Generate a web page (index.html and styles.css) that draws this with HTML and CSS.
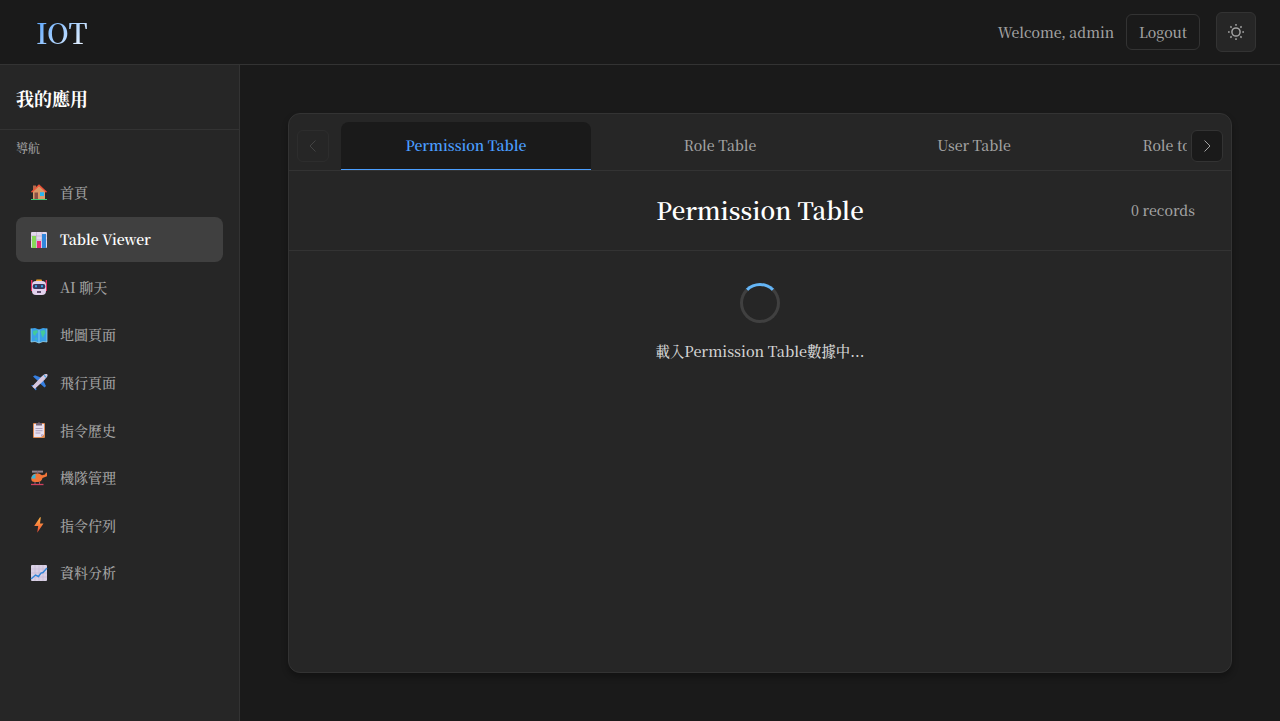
FILE: index.html
```
<!DOCTYPE html>
<html lang="zh-Hant">
<head>
<meta charset="utf-8">
<title>IOT</title>
<link rel="stylesheet" href="styles.css">
</head>
<body>
<header class="topbar">
  <div class="brand">IOT</div>
  <div class="user">
    <span class="welcome">Welcome, admin</span>
    <button class="logout">Logout</button>
    <button class="theme" aria-label="Theme">
      <svg width="18" height="18" viewBox="0 0 18 18" fill="none" stroke="currentColor" stroke-width="1.5"><circle cx="9" cy="9" r="4.100"/><path d="M9 1v1.700M9 15.300V17M1 9h1.700M15.300 9H17M3.400 3.400l1.200 1.200M13.400 13.400l1.200 1.200M3.400 14.600l1.200-1.200M13.400 4.600l1.200-1.200"/></svg>
    </button>
  </div>
</header>
<div class="shell">
  <aside class="sidebar">
    <h2 class="app-title">我的應用</h2>
    <div class="nav-label">導航</div>
    <nav class="nav">
      <a class="item"><svg class="icon" viewBox="0 0 18 18"><path d="M3 2.500h3v5H3z" fill="#b76a4b"/><path d="M3 8l6-5.500L15 8v9H3z" fill="#d99a68"/><path d="M1.500 9.300L9 2.200l7.500 7.100" fill="none" stroke="#ef5138" stroke-width="1.500"/><path d="M4.500 9.500H8V16H4.500z" fill="#8a5147"/><path d="M10 9.200h4v3.800h-4z" fill="#28b7ef"/><path d="M1 16h16v1H1z" fill="#3ecb75"/></svg><span>首頁</span></a>
      <a class="item active"><svg class="icon" viewBox="0 0 18 18"><rect x="1" y="1" width="16" height="16" rx="1" fill="#e2d8ed"/><path d="M1 5h16M1 9h16M6.500 1v16M12 1v16" stroke="#b8a8c9" stroke-width=".6"/><path d="M2 5h4v12H2z" fill="#86d95a"/><path d="M7 10h4v7H7z" fill="#e62d78"/><path d="M12 3h4v14h-4z" fill="#3287dc"/></svg><span>Table Viewer</span></a>
      <a class="item"><svg class="icon" viewBox="0 0 18 18"><path d="M1.700 2v11M16.300 2v11" stroke="#e52d60" stroke-width="1.400"/><rect x="6" y="1.500" width="6" height="3" rx="1" fill="#f6a624"/><rect x="2" y="3" width="14" height="14" rx="4" fill="#e2d1ec"/><rect x="2.700" y="6" width="12.600" height="5" rx="2" fill="#37395f"/><path d="M5 8.300h2M11 8.300h2" stroke="#38a4e9" stroke-width="2"/><path d="M7 14h4" stroke="#493557" stroke-width="1.700"/></svg><span>AI 聊天</span></a>
      <a class="item"><svg class="icon" viewBox="0 0 18 18"><path d="M1 2.500l4-.5 4 1.500L13 2l4 .5V16l-4-.5-4 1.500-4-1.500-4 .5z" fill="#3aa0e8"/><path d="M3 5l4-1 1 2-2 2-1 2-2-2zM10.500 5l4-1 1 3-1.500 2-1 3-1.500-3zM5 11.500l2 1-1 2z" fill="#43c99b"/><path d="M1 2.500V16l4-.5L9 17l4-1.500 4 .5V2.500M9 3.500V17" fill="none" stroke="#a5dff4" stroke-width=".7"/></svg><span>地圖頁面</span></a>
      <a class="item"><svg class="icon" viewBox="0 0 18 18"><path d="M3 3.500L5 2.300 12 5 8 8zM13 7l3 6-1.500 1.500L9.500 10zM1 12l3.500.3 1.300 1.200.7 3.500-1 .3-2-2.800z" fill="#367fe1"/><path d="M3 13.500L12.300 3.700Q15 1 16.500 1.600T14.700 5.700L4.800 15z" fill="#d6c8e1" stroke="#d6c8e1" stroke-width="1.200" stroke-linejoin="round"/><path d="M14 2.200l2 2" stroke="#4aa7e4" stroke-width="1.300"/></svg><span>飛行頁面</span></a>
      <a class="item"><svg class="icon" viewBox="0 0 18 18"><rect x="3" y="2" width="12" height="15" rx="1" fill="#dd8a52"/><path d="M4 3h10v10.500L11.500 16H4z" fill="#e9e0ef"/><path d="M6 2h2l1-1 1 1h2v2.500H6z" fill="#756576"/><path d="M5.500 7.500h7M5.500 9.700h7M5.500 12h5" stroke="#9d8fad" stroke-width=".8"/><path d="M14 13l-3 3v-2.500z" fill="#b6a3c6"/></svg><span>指令歷史</span></a>
      <a class="item"><svg class="icon" viewBox="0 0 18 18"><path d="M1.300 9.500Q1.500 5 6 4.500h3l3 1.700 3-.7 1-2 1 .3v3.400L12.500 9Q11.500 13 8 13H5q-4 0-3.700-3.500z" fill="#f27538"/><path d="M1.300 9.500Q2 5.500 5.500 5v4.500z" fill="#35b5dc"/><path d="M2 2.600h11" stroke="#93858f" stroke-width="2"/><path d="M7.500 2v3M5 13v2M9.500 13v2" stroke="#85647a"/><path d="M1 15.500h12.500" stroke="#ce405f" stroke-width="1.300"/></svg><span>機隊管理</span></a>
      <a class="item"><svg class="icon" viewBox="0 0 18 18"><defs><linearGradient id="bolt" x2="0" y2="1"><stop stop-color="#ffb344"/><stop offset="1" stop-color="#ee4935"/></linearGradient></defs><path d="M10 1.300L4.200 10h4L7.200 16.800 13.500 7.500H10L10.800 1.300z" fill="url(#bolt)"/></svg><span>指令佇列</span></a>
      <a class="item"><svg class="icon" viewBox="0 0 18 18"><rect x="1" y="1" width="16" height="16" rx="1" fill="#d9d0e5"/><path d="M1 5h16M1 9h16M1 13h16M5 1v16M9 1v16M13 1v16" stroke="#bcaecd" stroke-width=".5"/><path d="M1 15l4.500-4 3 1.500L11 9l2-.5L17 4" fill="none" stroke="#3186d8" stroke-width="1.400"/></svg><span>資料分析</span></a>
    </nav>
  </aside>
  <main class="main">
    <section class="card">
      <div class="tabs">
        <button class="arrow disabled" aria-label="Previous"><svg width="16" height="16" viewBox="0 0 16 16"><path d="M10.500 2.500L5 8l5.500 5.500"/></svg></button>
        <div class="tab-list">
          <div class="tab selected">Permission Table</div>
          <div class="tab">Role Table</div>
          <div class="tab">User Table</div>
          <div class="tab">Role to Permission Table</div>
        </div>
        <button class="arrow" aria-label="Next"><svg width="16" height="16" viewBox="0 0 16 16"><path d="M5.500 2.500L11 8l-5.500 5.500"/></svg></button>
      </div>
      <div class="heading">
        <span></span>
        <h1 class="title">Permission Table</h1>
        <span class="records">0 records</span>
      </div>
      <div class="loading">
        <div class="spinner"></div>
        <div class="message">載入Permission Table數據中...</div>
      </div>
    </section>
  </main>
</div>
</body>
</html>
```
FILE: styles.css
```
* { box-sizing: border-box; }
body {
  margin: 0;
  height: 100vh;
  overflow: hidden;
  display: flex;
  flex-direction: column;
  background: #1a1a1a;
  color: #a3a3a3;
  font-family: "Noto Serif CJK TC", "Noto Serif TC", "Source Serif 4", "Noto Serif", "Liberation Serif", "Noto Sans CJK TC", serif;
  font-size: 14px;
}
button { font: inherit; color: inherit; padding: 0; }
.topbar {
  flex: none;
  height: 65px;
  border-bottom: 1px solid #333;
  display: flex;
  align-items: center;
  justify-content: space-between;
  padding: 0 24px 0 36px;
}
.brand {
  font-size: 28px;
  font-weight: 600;
  line-height: 40px;
  background: linear-gradient(135deg, #4a9eff, #fff);
  background-clip: text;
  -webkit-background-clip: text;
  color: transparent;
}
.user { display: flex; align-items: center; }
.welcome { font-weight: 500; margin-right: 12px; }
.logout {
  width: 74px;
  height: 36px;
  margin-right: 16px;
  border: 1px solid #333;
  border-radius: 6px;
  background: transparent;
  font-weight: 500;
}
.theme {
  width: 40px;
  height: 40px;
  display: grid;
  place-items: center;
  border: 1px solid #333;
  border-radius: 6px;
  background: #262626;
}
.shell { flex: 1; min-height: 0; display: flex; }
.sidebar {
  flex: none;
  width: 240px;
  background: #262626;
  border-right: 1px solid #333;
}
.app-title {
  height: 65px;
  margin: 0;
  padding: 0 16px;
  line-height: 66px;
  border-bottom: 1px solid #333;
  color: #fff;
  font-size: 18px;
  font-weight: 700;
}
.nav-label { padding: 0 16px; font-size: 12px; font-weight: 500; line-height: 35px; height: 39px; }
.nav { display: flex; flex-direction: column; gap: 2.600px; padding: .5px 16px 0; }
.item {
  height: 45px;
  display: flex;
  align-items: center;
  gap: 12px;
  padding: 0 14px;
  border-radius: 8px;
  white-space: nowrap;
  font-weight: 500;
}
.item span { padding-bottom: .8px; }
.active { background: #404040; color: #fff; font-weight: 600; }
.icon { width: 18px; height: 18px; flex: none; }
.main { flex: 1; min-width: 0; padding: 48px; }
.card {
  height: 560px;
  border: 1px solid #333;
  border-radius: 12px;
  background: #262626;
  box-shadow: 0 4px 6px rgba(0, 0, 0, .3);
  overflow: hidden;
}
.tabs {
  height: 57px;
  display: flex;
  align-items: center;
  padding: 8px 8px 0;
  border-bottom: 1px solid #333;
}
.arrow {
  flex: none;
  width: 32px;
  height: 32px;
  display: grid;
  place-items: center;
  border: 1px solid #333;
  border-radius: 6px;
  background: #1a1a1a;
}
.arrow path { fill: none; stroke: currentColor; stroke-width: 1; }
.disabled { background: transparent; border-color: #2d2d2d; color: #434343; }
.tab-list { flex: 1; min-width: 0; display: flex; gap: 4px; margin: 0 4px 0 12px; overflow: hidden; }
.tab {
  flex: none;
  width: 250px;
  height: 48px;
  line-height: 46px;
  text-align: center;
  font-weight: 500;
}
.selected { background: #1a1a1a; color: #4a9eff; font-weight: 600; border-radius: 8px 8px 0 0; border-bottom: 1px solid #4a9eff; }
.heading {
  height: 80px;
  display: grid;
  grid-template-columns: 1fr auto 1fr;
  align-items: center;
  padding: 0 36px 2px;
  border-bottom: 1px solid #333;
}
.title { margin: 0; color: #fff; font-size: 24px; font-weight: 600; }
.records { text-align: right; font-weight: 500; }
.loading { display: flex; flex-direction: column; align-items: center; padding-top: 32px; gap: 16px; }
.spinner { width: 40px; height: 40px; border: 3px solid #404040; border-top-color: #64b5f6; border-radius: 50%; }
.message { color: #d4d4d4; font-size: 14.400px; font-weight: 500; line-height: 24px; }
```
